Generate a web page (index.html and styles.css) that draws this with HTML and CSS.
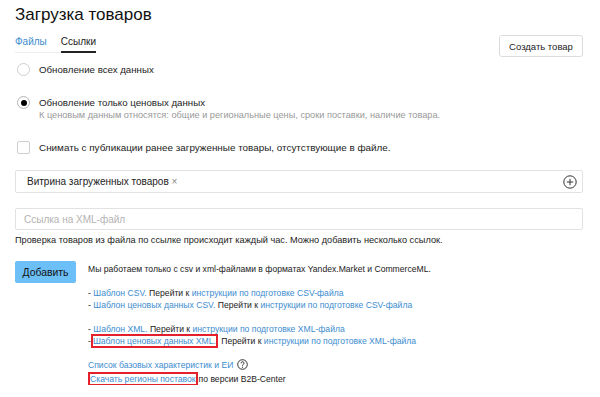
FILE: index.html
```html
<!DOCTYPE html>
<html lang="ru">
<head>
    <meta charset="UTF-8">
    <title>Загрузка товаров</title>
    <link rel="stylesheet" href="styles.css">
</head>
<body>
    <div class="page">
        <div class="header">
            <div>
                <h1 class="page-title">Загрузка товаров</h1>
                <div class="tabs">
                    <a class="tab">Файлы</a>
                    <a class="tab tab-active">Ссылки</a>
                </div>
            </div>
            <button class="btn-default">Создать товар</button>
        </div>

        <label class="option option-first">
            <span class="radio"></span>
            <span class="option-text">Обновление всех данных</span>
        </label>

        <label class="option">
            <span class="radio radio-checked"></span>
            <span class="option-text">
                Обновление только ценовых данных
                <span class="option-hint">К ценовым данным относятся: общие и региональные цены, сроки поставки, наличие товара.</span>
            </span>
        </label>

        <label class="option option-check">
            <span class="checkbox"></span>
            <span class="option-text">Снимать с публикации ранее загруженные товары, отсутствующие в файле.</span>
        </label>

        <div class="select-box">
            <span class="tag">Витрина загруженных товаров <span class="tag-remove">×</span></span>
            <svg class="add-icon" width="14" height="14" viewBox="0 0 14 14">
                <circle cx="7" cy="7" r="6.2" fill="none" stroke="#333" stroke-width="1"/>
                <path d="M7 3.8v6.4M3.8 7h6.4" stroke="#333" stroke-width="1"/>
            </svg>
        </div>

        <input class="link-input" type="text" placeholder="Ссылка на XML-файл">
        <div class="input-note">Проверка товаров из файла по ссылке происходит каждый час. Можно добавить несколько ссылок.</div>

        <div class="bottom">
            <button class="btn-primary">Добавить</button>
            <div class="info">
                <p>Мы работаем только с csv и xml-файлами в форматах Yandex.Market и CommerceML.</p>
                <p>
                    - <a class="link">Шаблон CSV.</a> Перейти к <a class="link">инструкции по подготовке CSV-файла</a><br>
                    - <a class="link">Шаблон ценовых данных CSV.</a> Перейти к <a class="link">инструкции по подготовке CSV-файла</a>
                </p>
                <p>
                    - <a class="link">Шаблон XML.</a> Перейти к <a class="link">инструкции по подготовке XML-файла</a><br>
                    -<a class="link marked">Шаблон ценовых данных XML.</a> Перейти к <a class="link">инструкции по подготовке XML-файла</a>
                </p>
                <p class="refs">
                    <a class="link">Список базовых характеристик и ЕИ</a>
                    <svg class="help-icon" width="11" height="11" viewBox="0 0 11 11">
                        <circle cx="5.5" cy="5.5" r="4.8" fill="none" stroke="#333" stroke-width="1"/>
                        <path d="M4 4.3a1.5 1.5 0 1 1 2.2 1.3c-.5.3-.7.5-.7 1.1" fill="none" stroke="#333" stroke-width="1"/>
                        <circle cx="5.5" cy="8.2" r=".6" fill="#333"/>
                    </svg>
                </p>
                <p class="extra">
                    <a class="link marked">Скачать регионы поставок</a>по версии B2B-Center
                </p>
            </div>
        </div>
    </div>
</body>
</html>
```

FILE: styles.css
```css
:root {
    --text-color: #222222;
    --muted-color: #999999;
    --link-color: #3d8dcf;
    --border-color: #e2e2e2;
}

* {
    margin: 0;
    padding: 0;
    box-sizing: border-box;
}

body {
    font-family: 'Liberation Sans', Arial, sans-serif;
    color: var(--text-color);
    background: #ffffff;
}

.page {
    padding: 5px 17px 0 15px;
}

.header {
    display: flex;
    justify-content: space-between;
    align-items: flex-end;
}

.page-title {
    font-size: 17px;
    font-weight: 400;
    line-height: 20px;
    color: #111;
}

.tabs {
    display: inline-flex;
    gap: 14px;
    margin-top: 10px;
    border-bottom: 1px solid #ededed;
}

.tab {
    font-size: 10px;
    line-height: 13px;
    padding-bottom: 3px;
    color: var(--link-color);
    cursor: pointer;
}

.tab-active {
    color: #222;
    border-bottom: 2px solid #222;
    margin-bottom: -1px;
}

.btn-default {
    font-family: inherit;
    font-size: 9.5px;
    color: #222;
    background: #fff;
    border: 1px solid #dcdcdc;
    border-radius: 3px;
    width: 84px;
    height: 22px;
    margin-bottom: -4px;
}

.option {
    display: flex;
    align-items: flex-start;
    gap: 9px;
    font-size: 9.7px;
    line-height: 13px;
    margin-top: 20px;
    margin-left: 2px;
}

.option-first {
    margin-top: 10px;
}

.option-check {
    margin-top: 19px;
    font-size: 9.9px;
}

.radio {
    flex: none;
    width: 13px;
    height: 13px;
    border: 1px solid #cfcfcf;
    border-radius: 50%;
    display: flex;
    align-items: center;
    justify-content: center;
}

.radio-checked {
    border-color: #b5b5b5;
}

.radio-checked::after {
    content: "";
    width: 6px;
    height: 6px;
    border-radius: 50%;
    background: #000;
}

.checkbox {
    flex: none;
    width: 13px;
    height: 13px;
    border: 1px solid #cfcfcf;
    border-radius: 2px;
}

.option-hint {
    display: block;
    color: var(--muted-color);
    font-size: 9.2px;
    line-height: 13px;
}

.select-box {
    display: flex;
    align-items: center;
    justify-content: space-between;
    height: 23px;
    margin-top: 16px;
    padding: 0 5px 0 11px;
    border: 1px solid var(--border-color);
    border-radius: 2px;
    font-size: 10px;
}

.tag-remove {
    color: #888;
}

.link-input {
    display: block;
    width: 100%;
    height: 22px;
    margin-top: 15px;
    padding: 0 8px;
    border: 1px solid var(--border-color);
    border-radius: 2px;
    font-family: inherit;
    font-size: 10px;
}

.link-input::placeholder {
    color: #b3b3b3;
}

.input-note {
    font-size: 9.2px;
    line-height: 12px;
    margin-top: 4px;
}

.bottom {
    display: flex;
    align-items: flex-start;
    gap: 12px;
    margin-top: 15px;
}

.btn-primary {
    flex: none;
    width: 61px;
    height: 22px;
    font-family: inherit;
    font-size: 10.4px;
    color: #111;
    background: #6cbff7;
    border: none;
    border-radius: 2px;
}

.info {
    font-size: 8.6px;
    line-height: 12px;
    padding-top: 2px;
}

.info p + p {
    margin-top: 12px;
}

.info p.extra {
    margin-top: 2px;
}

.link {
    color: var(--link-color);
    cursor: pointer;
}

.marked {
    outline: 2px solid #e3202b;
    outline-offset: 0;
    margin: 0 3px 0 2px;
}

.help-icon {
    vertical-align: -2px;
    margin-left: 1px;
}
```
